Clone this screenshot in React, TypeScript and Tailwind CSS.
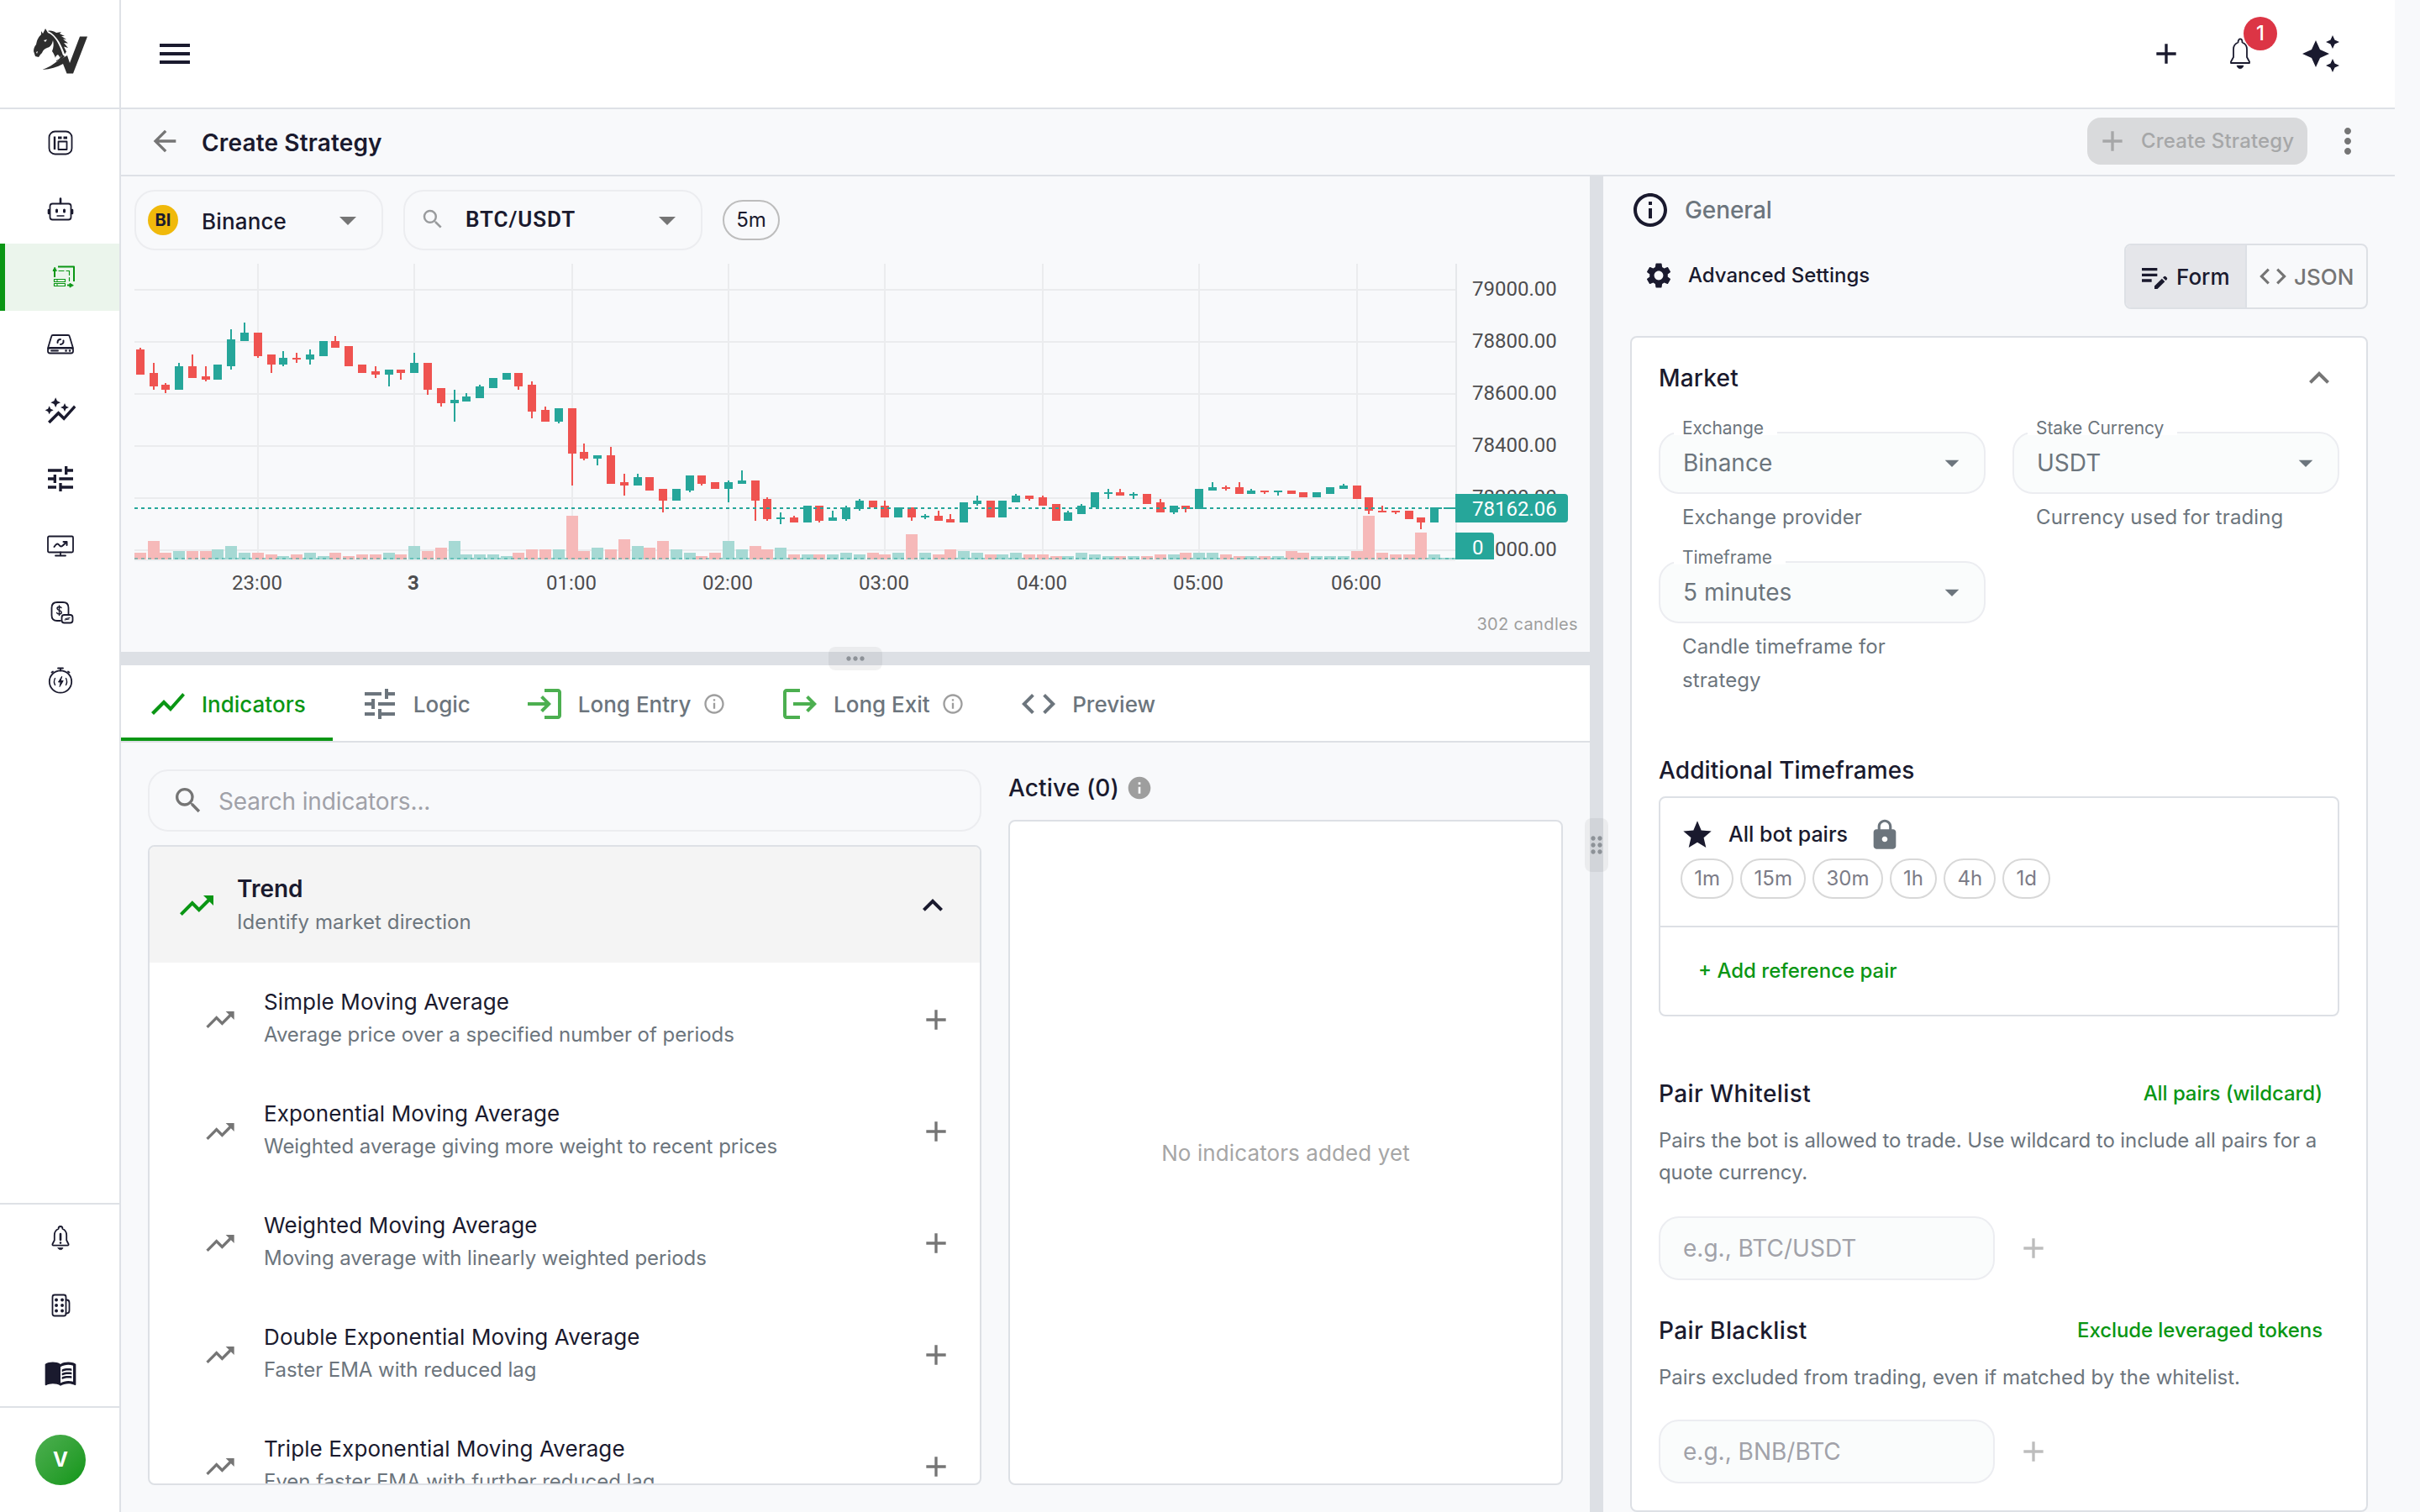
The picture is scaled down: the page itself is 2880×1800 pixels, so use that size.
import React from 'react';
import type { IconType } from 'react-icons';
import {
  MdAdd,
  MdArrowBack,
  MdArrowDropDown,
  MdAutoAwesome,
  MdAutoGraph,
  MdCode,
  MdDragIndicator,
  MdEditNote,
  MdExpandLess,
  MdInfo,
  MdInfoOutline,
  MdLock,
  MdLogin,
  MdLogout,
  MdMenu,
  MdMenuBook,
  MdMoreHoriz,
  MdMoreVert,
  MdSearch,
  MdSettings,
  MdShowChart,
  MdStar,
  MdTrendingUp,
  MdTune,
} from 'react-icons/md';

// [direction, body top, body bottom, wick top, wick bottom, volume], in chart units from the top
type Candle = ['u' | 'd', number, number, number, number, number];

const candles: Candle[] = [
  ['d', 51, 66, 50, 66, 4], ['d', 65, 73, 59, 75, 11], ['d', 72, 75, 71, 77, 4], ['u', 61, 75, 59, 75, 5],
  ['d', 61, 68, 54, 68, 5], ['d', 67, 69, 61, 70, 5], ['u', 60, 69, 60, 69, 6], ['u', 45, 61, 39, 63, 8],
  ['u', 41, 46, 35, 46, 4], ['d', 41, 55, 41, 56, 4], ['d', 54, 60, 54, 65, 3], ['u', 56, 60, 52, 61, 2],
  ['d', 56, 57, 53, 59, 3], ['u', 54, 57, 51, 60, 4], ['u', 46, 55, 46, 55, 2], ['d', 46, 50, 43, 50, 4],
  ['d', 49, 61, 49, 61, 2], ['d', 60, 65, 60, 65, 3], ['d', 64, 66, 61, 68, 3], ['u', 63, 66, 63, 73, 4],
  ['d', 63, 65, 63, 69, 3], ['u', 59, 65, 53, 65, 8], ['d', 59, 75, 59, 78, 5], ['d', 74, 83, 74, 85, 7],
  ['u', 81, 83, 75, 94, 11], ['u', 79, 82, 77, 82, 3], ['u', 73, 80, 72, 80, 3], ['u', 68, 74, 68, 74, 3],
  ['u', 65, 69, 65, 69, 2], ['d', 65, 73, 65, 75, 4], ['d', 72, 88, 70, 92, 6], ['d', 87, 94, 85, 94, 6],
  ['u', 86, 94, 86, 95, 6], ['d', 86, 113, 86, 132, 26], ['d', 112, 116, 107, 117, 5], ['u', 114, 116, 114, 120, 7],
  ['d', 114, 131, 109, 131, 6], ['d', 130, 132, 125, 138, 12], ['u', 127, 132, 125, 132, 8], ['d', 127, 135, 127, 135, 7],
  ['d', 134, 141, 134, 148, 11], ['u', 134, 141, 134, 141, 6], ['u', 126, 135, 126, 136, 4], ['d', 126, 131, 126, 132, 2],
  ['d', 130, 134, 130, 134, 4], ['u', 130, 134, 129, 142, 11], ['u', 129, 131, 123, 131, 6], ['d', 129, 141, 129, 153, 8],
  ['d', 140, 152, 139, 153, 6], ['u', 151, 152, 148, 155, 7], ['d', 151, 154, 150, 154, 3], ['u', 144, 154, 144, 154, 3],
  ['d', 144, 153, 144, 154, 3], ['u', 151, 153, 147, 153, 3], ['u', 145, 152, 144, 153, 4], ['u', 141, 146, 140, 147, 3],
  ['d', 141, 145, 141, 145, 4], ['d', 144, 151, 141, 151, 3], ['u', 145, 151, 145, 151, 4], ['d', 145, 151, 145, 153, 15],
  ['u', 150, 151, 149, 152, 4], ['d', 150, 153, 147, 153, 3], ['d', 152, 154, 149, 154, 6], ['u', 142, 154, 142, 154, 5],
  ['u', 141, 143, 138, 144, 4], ['d', 141, 151, 141, 151, 3], ['u', 141, 151, 141, 151, 3], ['u', 138, 142, 137, 142, 4],
  ['d', 138, 140, 138, 141, 3], ['d', 139, 144, 138, 144, 3], ['d', 143, 153, 143, 153, 2], ['u', 148, 153, 147, 153, 2],
  ['u', 144, 149, 143, 149, 4], ['u', 136, 145, 136, 145, 3], ['u', 136, 137, 134, 140, 2], ['d', 136, 138, 134, 138, 2],
  ['u', 137, 138, 136, 140, 2], ['d', 137, 143, 137, 143, 2], ['d', 142, 148, 140, 148, 3], ['u', 144, 148, 144, 149, 3],
  ['d', 144, 146, 144, 148, 4], ['u', 134, 146, 134, 146, 4], ['u', 133, 135, 130, 135, 4], ['d', 133, 134, 132, 135, 3],
  ['d', 133, 137, 130, 137, 2], ['u', 135, 137, 134, 137, 2], ['d', 135, 136, 135, 137, 2], ['u', 135, 136, 135, 138, 2],
  ['d', 135, 137, 135, 137, 5], ['d', 136, 139, 136, 139, 4], ['u', 136, 139, 136, 139, 2], ['u', 133, 137, 133, 137, 2],
  ['u', 132, 134, 131, 134, 2], ['d', 132, 140, 132, 140, 5], ['d', 139, 147, 139, 149, 26], ['d', 147, 148, 144, 148, 4],
  ['d', 147, 148, 147, 149, 3], ['d', 147, 152, 147, 152, 3], ['d', 151, 154, 151, 158, 16], ['u', 145, 154, 145, 154, 3],
  ['u', 145, 146, 145, 146, 1],
];

const candleX = (index: number) => 2 * Math.round(82.75 + index * 7.783) + 1 - 160;

const timeTicks = [
  { index: 9, label: '23:00' },
  { index: 21, label: '3', bold: true },
  { index: 33, label: '01:00' },
  { index: 45, label: '02:00' },
  { index: 57, label: '03:00' },
  { index: 69, label: '04:00' },
  { index: 81, label: '05:00' },
  { index: 93, label: '06:00' },
];

const priceTicks = ['79000.00', '78800.00', '78600.00', '78400.00', '78200.00', '78000.00'];

const indicators = [
  { name: 'Simple Moving Average', description: 'Average price over a specified number of periods' },
  { name: 'Exponential Moving Average', description: 'Weighted average giving more weight to recent prices' },
  { name: 'Weighted Moving Average', description: 'Moving average with linearly weighted periods' },
  { name: 'Double Exponential Moving Average', description: 'Faster EMA with reduced lag' },
  { name: 'Triple Exponential Moving Average', description: 'Even faster EMA with further reduced lag' },
];

interface Tab {
  label: string;
  icon: IconType;
  iconColor: string;
  info?: boolean;
  active?: boolean;
}

const tabs: Tab[] = [
  { label: 'Indicators', icon: MdShowChart, iconColor: 'text-[#0a9614]', active: true },
  { label: 'Logic', icon: MdTune, iconColor: 'text-[#6c757d]' },
  { label: 'Long Entry', icon: MdLogin, iconColor: 'text-[#4caf50]', info: true },
  { label: 'Long Exit', icon: MdLogout, iconColor: 'text-[#4caf50]', info: true },
  { label: 'Preview', icon: MdCode, iconColor: 'text-[#6c757d]' },
];

const Logo = () => (
  <svg width="66" height="56" viewBox="0 0 66 56" fill="#2e2e2e" className="-translate-y-0.5 translate-x-px">
    <path d="m9 3 2 3 3-6 3 5c5 2 9 6 12 11 3 6 6 11 7 18l-3-2-1 3-3-4c-2 1-3 2-3 4-1-3-2-5-4-8 2-5 2-9 1-13-1 5-3 8-7 9-3 1-5 3-6 6l-2 2-2 3-4-1-2-6c0-3 1-6 3-8 1-6 3-9 6-12z" />
    <path d="M17 3c3-1 7 0 10 2l6-1-2 2 6 3h-4l6 4-4-.500 6 5-5-.5 5 6-5-1.500 3 6-2 3C34 22 29 9 17 3z" />
    <path d="M18 4c9 5 14 16 18 29" fill="none" stroke="#fff" strokeWidth="1.300" />
    <path d="M27 38c3-1 6-4 7-7l3 2c-2 3-6 5-10 6z" />
    <path d="M10.500 49C18 46 23 43 28 39l12-7 3 9 12-31.500h9L47 53.500h-7.500L35 42c-7 4-15 6.500-24.500 7z" />
    <path d="m12 14 4-1-2 3zM3 28l2-1-1 3z" fill="#fff" />
  </svg>
);

const iconBase = {
  width: 36,
  height: 36,
  viewBox: '0 0 36 36',
  fill: 'none',
  stroke: '#1a1a2e',
  strokeWidth: 1.8,
  strokeLinecap: 'round' as const,
  strokeLinejoin: 'round' as const,
};

const DashboardIcon = () => (
  <svg {...iconBase}>
    <rect x="4.500" y="4.500" width="27" height="27" rx="7" />
    <path d="M11 10.500v15.500" strokeWidth="2.400" strokeLinecap="butt" />
    <path d="M15 12h4.500M21.500 12H26" strokeWidth="3" strokeLinecap="butt" />
    <rect x="15.500" y="16.500" width="10" height="9.500" />
  </svg>
);

const RobotIcon = () => (
  <svg {...iconBase}>
    <rect x="5.500" y="10.500" width="25" height="19" rx="3" />
    <path d="M18 10V4.500M4 18v4M32 18v4" strokeWidth="2.600" />
    <path d="M13.500 18v2M22.500 18v2" strokeWidth="3" />
    <path d="M14 25h8" strokeWidth="1.400" />
  </svg>
);

const StrategyIcon = () => (
  <svg {...iconBase} stroke="#0a9614">
    <path d="M13 5.500h19V23" strokeLinecap="butt" strokeWidth="2" />
    <path d="M9 18V9" strokeLinecap="butt" strokeWidth="2" />
    <path d="M9 6.500 7 10.500h4zM31 27.500l-4-2.200v4.400z" fill="#0a9614" strokeWidth="1" />
    <path d="M24 27.500h4" strokeLinecap="butt" strokeWidth="2" />
    <path d="M14 10.500h6M23 10.500h3.500v5M26.500 18.500v4" strokeWidth="1.200" />
    <rect x="8.500" y="20.500" width="13" height="3" strokeWidth="1.200" />
    <rect x="8.500" y="25.500" width="13" height="3" strokeWidth="1.200" />
    <path d="M12 20.500v3M12 25.500v3" strokeWidth="1" />
  </svg>
);

const DriveIcon = () => (
  <svg {...iconBase}>
    <path d="M9 7h18c1 0 1.600.6 1.800 1.400L33 22.500H3L7.200 8.400C7.400 7.500 8 7 9 7z" />
    <rect x="3" y="22" width="30" height="6.500" rx="2.500" />
    <path d="M7 25.500h8" />
    <path d="M24.500 25.500h.1M29 25.500h.1" strokeWidth="2.600" />
    <path d="M14.500 16c0-3 2-4 3.500-4M21.500 13.500c.5 3-1.500 4.500-3.500 4.500" strokeWidth="2" />
  </svg>
);

const MonitorIcon = () => (
  <svg {...iconBase}>
    <rect x="3" y="6.500" width="30" height="19" rx="1.500" />
    <path d="M18 25.500v4M12 29.500h12" />
    <path d="M10.500 19c3-4.500 4.500-4 6-2s3 2 4.500.2l4-4M21.500 13h4v4" strokeWidth="2" />
  </svg>
);

const MoneyIcon = () => (
  <svg {...iconBase} className="translate-x-px">
    <path d="M17 27h-4c-4 0-6.500-2-6.500-6.500v-9C6.500 7.500 9 5 13 5h7c4 0 6.500 2.500 6.500 6.500V20" />
    <rect x="18.500" y="20" width="13" height="9.500" rx="3" />
    <path d="M22 26l5-1M23 24.500l5-1" strokeWidth="1.200" />
    <path d="M18 11.500c-.8-1.400-5-1.600-5 .8 0 3 5.200 1.700 5.200 4.700 0 2.600-4.600 2.600-5.600.5M15.500 9v11.500" strokeWidth="1.500" />
  </svg>
);

const StopwatchIcon = () => (
  <svg {...iconBase}>
    <circle cx="18" cy="19.500" r="13.200" />
    <path d="M15 3.500h6M18 3.500v3M7.500 8.500l1.500-1M28.500 8.500 27 7.500" />
    <path d="m19.500 13.500-4 6.500h2.700L17 25.500l4.200-7h-2.700z" fill="#1a1a2e" strokeWidth="1" />
    <path d="M11.500 15.500c-1.300 2.500-1.300 5.500 0 8M24.500 15.500c1.300 2.500 1.300 5.500 0 8" strokeWidth="1.400" />
  </svg>
);

const AlertBellIcon = () => (
  <svg {...iconBase}>
    <path d="M15.500 7c0-4 5-4 5 0 3 1.200 4.700 3.800 4.700 7.500v6l2.300 4.500c.3.900 0 1.700-1 1.700h-17c-1 0-1.300-.8-1-1.700l2.300-4.500v-6c0-3.700 1.700-6.300 4.700-7.500z" />
    <path d="M18 13v7M18 23.500v.1" strokeWidth="2.600" />
    <path d="M15 29.500h6c-.5 3-5.500 3-6 0z" fill="#1a1a2e" strokeWidth=".6" />
  </svg>
);

const BuildingIcon = () => (
  <svg {...iconBase}>
    <rect x="8.500" y="5.500" width="16" height="25" rx="2.500" />
    <path d="M24.500 11.500h1c2 0 3 1.500 3 3.500v9c0 2-1 3.500-3 3.500h-1" />
    <path d="M13 11.500h.1M20 11.500h.1M13 18h.1M20 18h.1M13 24.500h.1M20 24.500h.1" strokeWidth="3.800" />
  </svg>
);

const BellIcon = () => (
  <svg width="40" height="40" viewBox="0 0 40 40" fill="none" stroke="#1a1a2e" strokeWidth="1.800" strokeLinejoin="round">
    <path d="M17.500 6.500c0-5.500 5-5.500 5 0 3.500 1.300 5.500 4.200 5.500 8.200V24l3 5.500v1.500H9v-1.500l3-5.500v-9.300c0-4 2-6.900 5.500-8.200z" />
    <path d="M16 34h8c-1 5-7 5-8 0z" fill="#1a1a2e" strokeWidth=".5" />
  </svg>
);

const NavItem: React.FC<{ active?: boolean; children: React.ReactNode }> = ({ active, children }) => (
  <div
    className={`flex h-20 items-center justify-center text-[#1a1a2e] ${
      active ? 'border-l-[6px] border-[#0a9614] bg-[#ebf5ec]' : 'pl-0.5'
    }`}
  >
    {children}
  </div>
);

const Sidebar = () => (
  <aside className="flex w-[144px] shrink-0 flex-col border-r-2 border-[#dee1e6] bg-white">
    <div className="flex h-[130px] items-center justify-center border-b-2 border-[#dee1e6] pl-0.5">
      <Logo />
    </div>
    <nav className="flex flex-1 flex-col">
      <NavItem><DashboardIcon /></NavItem>
      <NavItem><RobotIcon /></NavItem>
      <NavItem active><StrategyIcon /></NavItem>
      <NavItem><DriveIcon /></NavItem>
      <NavItem><MdAutoGraph size={40} /></NavItem>
      <NavItem><MdTune size={40} /></NavItem>
      <NavItem><MonitorIcon /></NavItem>
      <NavItem><MoneyIcon /></NavItem>
      <NavItem><StopwatchIcon /></NavItem>
    </nav>
    <div className="border-t-2 border-[#dee1e6]">
      <NavItem><AlertBellIcon /></NavItem>
      <NavItem><BuildingIcon /></NavItem>
      <NavItem><MdMenuBook size={40} /></NavItem>
    </div>
    <div className="flex h-[126px] items-center justify-center border-t-2 border-[#dee1e6] pl-0.5">
      <div className="flex size-[60px] items-center justify-center rounded-full bg-linear-to-br from-[#4caf50] to-[#0a9614] text-2xl font-bold text-white">
        V
      </div>
    </div>
  </aside>
);

const TopBar = () => (
  <header className="flex h-[130px] shrink-0 items-center justify-between border-b-2 border-[#dee1e6] bg-white pl-10 pr-16">
    <MdMenu size={48} />
    <div className="flex items-center">
      <MdAdd size={40} />
      <div className="relative ml-12">
        <BellIcon />
        <span className="absolute -top-6 left-6 flex size-10 items-center justify-center rounded-full bg-[#dc3545] text-2xl font-medium text-white">
          1
        </span>
      </div>
      <MdAutoAwesome size={48} className="ml-[52px]" />
    </div>
  </header>
);

const PageBar = () => (
  <div className="flex h-20 shrink-0 items-center border-b-2 border-[#dee1e6] px-8">
    <MdArrowBack size={40} className="-translate-y-px text-[#757575]" />
    <h1 className="ml-6 flex-1 translate-y-px text-[28px] font-semibold leading-10 tracking-[0.15px]">
      Create Strategy
    </h1>
    <button className="flex h-14 w-[262px] -translate-y-px items-center rounded-2xl bg-[#d9dadc] pl-[10px] text-2xl font-medium tracking-[0.15px] text-[#a6a7a8]">
      <MdAdd size={40} />
      <span className="ml-[14px]">Create Strategy</span>
    </button>
    <MdMoreVert size={48} className="ml-6 -translate-y-px text-[#757575]" />
  </div>
);

const CandleChart = () => (
  <svg width="1720" height="406" viewBox="0 0 1720 406" fontFamily="Roboto, sans-serif" fontSize="24">
    {timeTicks.map((tick) => (
      <rect key={tick.label} x={candleX(tick.index) - 1} y="0" width="2" height="352" fill="#ebecee" />
    ))}
    {priceTicks.map((label, i) => (
      <rect key={label} x="0" y={30 + i * 62} width="1572" height="2" fill="#ebecee" />
    ))}
    {candles.map(([dir, , , , , volume], i) => (
      <rect
        key={i}
        x={candleX(i) - 7}
        y={352 - volume * 2}
        width="14"
        height={volume * 2}
        fill={dir === 'u' ? '#a6d9d4' : '#f6b9b9'}
      />
    ))}
    {candles.map(([dir, top, bottom, high, low], i) => (
      <g key={i} fill={dir === 'u' ? '#26a69a' : '#ef5350'}>
        <rect x={candleX(i) - 1} y={high * 2} width="2" height={(low - high) * 2} />
        <rect x={candleX(i) - 5} y={top * 2} width="10" height={(bottom - top) * 2} />
      </g>
    ))}
    <path d="M0 291H1572" stroke="#26a69a" strokeWidth="2" strokeDasharray="4 4" />
    <path d="M0 351H1572" stroke="#26a69a" strokeOpacity="0.5" strokeWidth="2" strokeDasharray="4 4" />
    <rect x="1572" y="0" width="2" height="352" fill="#e6e8eb" />
    <rect x="0" y="352" width="1572" height="2" fill="#eef0f2" />
    {priceTicks.map((label, i) => (
      <text key={label} x="1592" y={38 + i * 62} fill="#4d4d4f">
        {label}
      </text>
    ))}
    {timeTicks.map((tick) => (
      <text
        key={tick.label}
        x={candleX(tick.index) - 1}
        y="388"
        textAnchor="middle"
        fontWeight={tick.bold ? 700 : 400}
        fill="#4d4d4f"
      >
        {tick.label}
      </text>
    ))}
    <path d="M1572 274h130a4 4 0 0 1 4 4v26a4 4 0 0 1-4 4h-130z" fill="#26a69a" />
    <text x="1592" y="300" fill="#fff">78162.06</text>
    <path d="M1572 320h42a4 4 0 0 1 4 4v28h-46z" fill="#26a69a" />
    <text x="1592" y="346" fill="#fff">0</text>
  </svg>
);

const ChartPanel = () => (
  <section className="flex h-[566px] shrink-0 flex-col pl-4 pt-4">
    <div className="flex h-[72px] items-center">
      <div className="flex h-[72px] w-[296px] items-center rounded-3xl border-2 border-[#ecedf0] pl-[14px] pr-4">
        <span className="flex size-9 items-center justify-center rounded-full bg-[#f0b90b] text-xl font-bold">
          BI
        </span>
        <span className="ml-7 flex-1 translate-y-px text-[26px] font-medium tracking-[0.15px]">Binance</span>
        <MdArrowDropDown size={48} className="text-[#757575]" />
      </div>
      <div className="ml-6 flex h-[72px] w-[356px] items-center rounded-3xl border-2 border-[#ecedf0] pl-[18px] pr-4">
        <MdSearch size={30} className="-translate-y-px text-[#999b9d]" />
        <span className="ml-6 flex-1 -translate-y-px font-[Roboto,sans-serif] text-[26px] font-semibold tracking-[0.9px]">
          BTC/USDT
        </span>
        <MdArrowDropDown size={48} className="text-[#757575]" />
      </div>
      <span className="ml-6 flex h-12 w-[68px] items-center justify-center rounded-full border-2 border-[#bdbdbd] text-2xl">
        5m
      </span>
    </div>
    <div className="pt-4">
      <CandleChart />
    </div>
    <div className="pr-[14px] pt-[7px] text-right text-xl leading-8 tracking-[0.35px] text-[#9e9e9e]">302 candles</div>
  </section>
);

const HorizontalSplitter = () => (
  <div className="relative z-10 h-4 shrink-0 bg-[#dde0e5]">
    <div className="absolute -top-1.5 left-[842px] flex h-7 w-16 items-center justify-center rounded-lg bg-black/5">
      <MdMoreHoriz size={32} className="text-[#8d9298]" />
    </div>
  </div>
);

const VerticalSplitter = () => (
  <div className="relative z-10 w-4 shrink-0 bg-[#dde0e5]">
    <div className="absolute -left-1.5 top-[764px] flex h-16 w-7 items-center justify-center rounded-lg bg-black/5">
      <MdDragIndicator size={32} className="shrink-0 text-[#8d9298]" />
    </div>
  </div>
);

const TabBar = () => (
  <div className="flex h-[92px] shrink-0 border-b-2 border-[#dde0e5] bg-white">
    {tabs.map(({ label, icon: Icon, iconColor, info, active }) => (
      <div
        key={label}
        className={`flex items-center gap-4 border-b-4 px-8 text-[26px] font-medium ${
          active ? 'border-[#0a9614] text-[#0a9614]' : 'border-transparent text-[#6c757d]'
        }`}
      >
        <Icon size={48} className={`translate-y-[3px] ${iconColor}`} />
        <span className="translate-y-[3px]">{label}</span>
        {info && <MdInfoOutline size={28} className="-ml-[2.5px] translate-y-[3px] text-[#9e9e9e]" />}
      </div>
    ))}
  </div>
);

const IndicatorList = () => (
  <div className="flex w-[992px] flex-col">
    <div className="flex h-[74px] shrink-0 items-center rounded-3xl border-2 border-[#ecedf0] pl-[26px]">
      <MdSearch size={40} className="text-[#757575]" />
      <span className="ml-4 translate-y-px text-[28px] tracking-[-0.15px] text-[#a0a1a8]">Search indicators...</span>
    </div>
    <div className="mt-4 h-[762px] overflow-hidden rounded-lg border-2 border-[#dde0e5] bg-white">
      <div className="flex h-[138px] items-center bg-[#f4f4f4] px-8">
        <MdTrendingUp size={48} className="translate-y-px text-[#0a9614]" />
        <div className="ml-6 flex-1">
          <p className="text-[28px] font-semibold leading-10">Trend</p>
          <p className="text-2xl leading-[39px] tracking-[0.1px] text-[#6c757d]">Identify market direction</p>
        </div>
        <MdExpandLess size={48} className="translate-y-px" />
      </div>
      {indicators.map((indicator) => (
        <div key={indicator.name} className="flex h-[132.85px] items-center pl-16 pr-8">
          <MdTrendingUp size={40} className="translate-y-0.5 text-[#757575]" />
          <div className="ml-8 flex-1">
            <p className="text-[26px] leading-10 tracking-[0.12px]">{indicator.name}</p>
            <p className="text-2xl leading-[38px] tracking-[-0.04px] text-[#6c757d]">{indicator.description}</p>
          </div>
          <MdAdd size={40} className="translate-y-0.5 text-[#757575]" />
        </div>
      ))}
    </div>
  </div>
);

const ActiveIndicators = () => (
  <div className="ml-8 flex w-[660px] flex-col">
    <div className="flex h-[44px] items-center">
      <h2 className="text-[28px] font-medium tracking-[0.15px]">Active (0)</h2>
      <MdInfo size={32} className="ml-2 text-[#9e9e9e]" />
    </div>
    <div className="mt-4 flex h-[792px] items-center justify-center rounded-lg border-2 border-[#dde0e5] bg-white text-[26px] tracking-[0.1px] text-[#a6a6a6]">
      No indicators added yet
    </div>
  </div>
);

interface SelectFieldProps {
  label: string;
  value: string;
  helper: string;
  helperWidth?: string;
}

const SelectField: React.FC<SelectFieldProps> = ({ label, value, helper, helperWidth = 'w-full' }) => (
  <div>
    <div className="relative flex h-[74px] items-center justify-between rounded-3xl border-2 border-[#ecedf1] bg-[#fafcfc] pl-[27px] pr-[18px] text-[28px] text-[#6c757d]">
      <span className="absolute -top-[14px] left-4 h-4 bg-white pl-[10px] pr-4 text-[21px] leading-4 tracking-[-0.05px]">
        {label}
      </span>
      <span>{value}</span>
      <MdArrowDropDown size={40} />
    </div>
    <p className={`mt-2 pl-7 text-2xl leading-10 tracking-[0.1px] text-[#6c757d] ${helperWidth}`}>{helper}</p>
  </div>
);

const PairInput: React.FC<{ placeholder: string }> = ({ placeholder }) => (
  <div className="flex items-center">
    <div className="flex h-[76px] w-[400px] items-center rounded-3xl border-2 border-[#ecedf1] bg-[#fafcfc] pl-[27px] text-[28px] text-[#a1a2a9]">
      {placeholder}
    </div>
    <MdAdd size={40} className="ml-[26px] text-[#bdbdbd]" />
  </div>
);

const PairHeader: React.FC<{ title: string; action: string }> = ({ title, action }) => (
  <div className="flex h-[44px] items-center justify-between pr-5">
    <h3 className="text-[28px] font-medium tracking-[0.4px]">{title}</h3>
    <span className="text-2xl font-medium tracking-[-0.08px] text-[#0a9614]">{action}</span>
  </div>
);

const SettingsPanel = () => (
  <section className="flex w-[942px] flex-col px-8">
    <div className="flex h-20 shrink-0 items-center">
      <MdInfoOutline size={48} />
      <span className="ml-[17px] text-[28px] font-medium tracking-[-0.1px] text-[#6c757d]">General</span>
    </div>
    <div className="flex h-[78px] shrink-0 items-center justify-between">
      <div className="flex -translate-y-px items-center pl-4">
        <MdSettings size={36} />
        <span className="ml-[17px] text-2xl font-medium">Advanced Settings</span>
      </div>
      <div className="flex h-[78px] w-[290px] overflow-hidden rounded-lg border-2 border-[#dde0e5] text-[26px] font-medium">
        <div className="flex w-[144px] items-center border-r-2 border-[#dde0e5] bg-[#e5e6ea] pl-[14px]">
          <MdEditNote size={40} />
          <span className="ml-1.5">Form</span>
        </div>
        <div className="flex items-center pl-3 text-[#757575]">
          <MdCode size={38} />
          <span className="ml-1.5">JSON</span>
        </div>
      </div>
    </div>

    <div className="mt-8 flex h-[1400px] shrink-0 flex-col rounded-lg border-2 border-[#dde0e5] bg-white px-8">
      <div className="flex h-24 shrink-0 items-center justify-between">
        <h2 className="text-[28px] font-medium tracking-[0.2px]">Market</h2>
        <MdExpandLess size={48} className="text-[#757575]" />
      </div>
      <div className="mt-4 grid grid-cols-2 gap-8">
        <SelectField label="Exchange" value="Binance" helper="Exchange provider" />
        <SelectField label="Stake Currency" value="USDT" helper="Currency used for trading" />
        <SelectField
          label="Timeframe"
          value="5 minutes"
          helper="Candle timeframe for strategy"
          helperWidth="w-[340px]"
        />
      </div>

      <h3 className="mt-16 translate-y-px text-[28px] font-medium leading-[44px] tracking-[0.1px]">
        Additional Timeframes
      </h3>
      <div className="mt-[10px] h-[262px] shrink-0 rounded-lg border-2 border-[#dde0e5]">
        <div className="h-[154px] border-b-2 border-[#dde0e5] pl-6 pt-6">
          <div className="flex h-10 items-center">
            <MdStar size={40} />
            <span className="ml-[17px] text-[25px] font-medium">All bot pairs</span>
            <MdLock size={40} className="ml-6 text-[#6c757d]" />
          </div>
          <div className="mt-2 flex gap-2">
            {['1m', '15m', '30m', '1h', '4h', '1d'].map((frame) => (
              <span
                key={frame}
                className="flex h-12 items-center rounded-full border-2 border-[#d8d8d8] px-[14.25px] text-2xl text-[#7c7c87]"
              >
                {frame}
              </span>
            ))}
          </div>
        </div>
        <p className="pl-[45px] text-2xl font-medium leading-[104px] text-[#0a9614]">+ Add reference pair</p>
      </div>

      <div className="mt-[70px]">
        <PairHeader title="Pair Whitelist" action="All pairs (wildcard)" />
        <p className="mb-[33px] mt-[15px] text-2xl leading-[38px] tracking-[-0.08px] text-[#6c757d]">
          Pairs the bot is allowed to trade. Use wildcard to include all pairs for a quote currency.
        </p>
        <PairInput placeholder="e.g., BTC/USDT" />
      </div>
      <div className="mt-[38px]">
        <PairHeader title="Pair Blacklist" action="Exclude leveraged tokens" />
        <p className="mb-[31px] mt-[15px] text-2xl leading-[38px] text-[#6c757d]">
          Pairs excluded from trading, even if matched by the whitelist.
        </p>
        <PairInput placeholder="e.g., BNB/BTC" />
      </div>
    </div>
  </section>
);

const App: React.FC = () => {
  return (
    <div className="flex h-[1800px] w-[2880px] overflow-hidden bg-[#f8f9fb] font-[Inter,sans-serif] text-[#1a1a2e]">
      <Sidebar />
      <div className="flex w-[2706px] flex-col">
        <TopBar />
        <PageBar />
        <main className="flex flex-1">
          <div className="flex w-[1748px] flex-col">
            <ChartPanel />
            <HorizontalSplitter />
            <TabBar />
            <div className="flex flex-1 p-8">
              <IndicatorList />
              <ActiveIndicators />
            </div>
          </div>
          <VerticalSplitter />
          <SettingsPanel />
        </main>
      </div>
    </div>
  );
};

export default App;
